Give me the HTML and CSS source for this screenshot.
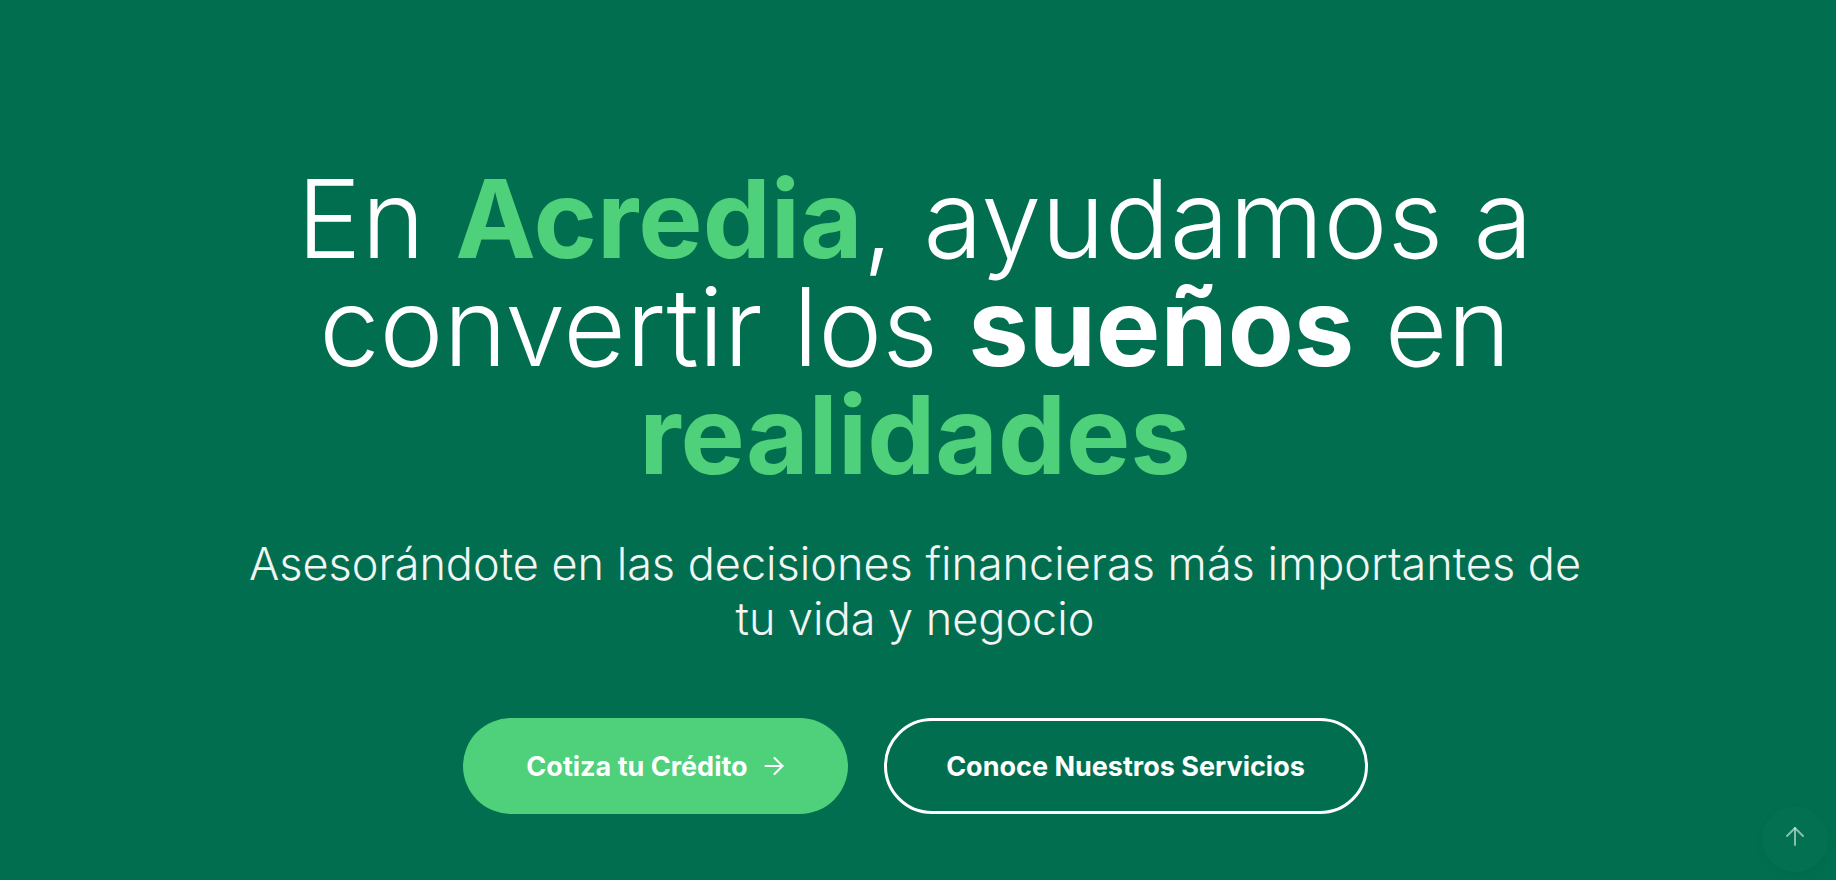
FILE: index.html
```html
<!DOCTYPE html>
<html lang="es">
<head>
<meta charset="utf-8">
<title>Acredia</title>
<link rel="stylesheet" href="styles.css">
</head>
<body>
<main class="hero">
  <div class="hero-inner">
    <h1 class="hero-title">En <span class="accent">Acredia</span>, ayudamos a convertir los <strong class="strong">sueños</strong> en <span class="accent">realidades</span></h1>
    <p class="hero-sub">Asesorándote en las decisiones financieras más importantes de tu vida y negocio</p>
    <div class="hero-actions">
      <a class="btn btn-primary" href="#">Cotiza tu Crédito
        <svg class="btn-arrow" viewBox="0 0 20 20" width="20" height="20" fill="none" stroke="currentColor" stroke-width="2" stroke-linecap="round" stroke-linejoin="round"><path d="M1.5 10h17"/><path d="M10.5 2l8 8-8 8"/></svg>
      </a>
      <a class="btn btn-outline" href="#">Conoce Nuestros Servicios</a>
    </div>
  </div>
</main>
<button class="to-top" aria-label="Subir">
  <svg viewBox="0 0 20 20" width="20" height="20" fill="none" stroke="currentColor" stroke-width="2" stroke-linecap="round" stroke-linejoin="round"><path d="M10 19V2"/><path d="M2 10l8-8 8 8"/></svg>
</button>
</body>
</html>
```
FILE: styles.css
```css
* { box-sizing: border-box; }
html, body { margin: 0; padding: 0; }
body {
  background: #016f4f;
  font-family: Inter, "Noto Sans", sans-serif;
  color: #ffffff;
  height: 880px;
  overflow: hidden;
}
.hero {
  display: flex;
  justify-content: center;
  padding-top: 165px;
  padding-right: 6px;
}
.hero-inner {
  width: 1400px;
  display: flex;
  flex-direction: column;
  align-items: center;
  text-align: center;
}
.hero-title {
  margin: 0;
  font-size: 108px;
  line-height: 108px;
  font-weight: 300;
  max-width: 1400px;
}
.accent { color: #4fd07a; font-weight: 700; }
.strong { font-weight: 700; }
.hero-sub {
  margin: 47px 0 0;
  font-size: 45px;
  line-height: 55px;
  font-weight: 300;
  max-width: 1380px;
  color: #f2f5f3;
}
.hero-actions {
  display: flex;
  gap: 36px;
  margin-top: 72px;
}
.btn {
  display: inline-flex;
  align-items: center;
  justify-content: center;
  gap: 16px;
  height: 96px;
  border-radius: 48px;
  font-size: 27px;
  font-weight: 700;
  color: #fff;
  text-decoration: none;
}
.btn-primary {
  width: 385px;
  background: #4fd07a;
}
.btn-arrow { width: 20px; height: 20px; }
.btn-outline {
  width: 484px;
  border: 3px solid #ffffff;
  background: transparent;
}
.to-top {
  position: fixed;
  right: 8px;
  bottom: 8px;
  width: 66px;
  height: 66px;
  border-radius: 50%;
  border: none;
  background: rgba(255, 255, 255, 0.012);
  box-shadow: 0 4px 10px rgba(0, 0, 0, 0.04);
  color: rgba(215, 240, 228, 0.62);
  display: flex;
  align-items: center;
  justify-content: center;
  padding: 0 0 6px;
}
.to-top svg { width: 20px; height: 20px; }
```
